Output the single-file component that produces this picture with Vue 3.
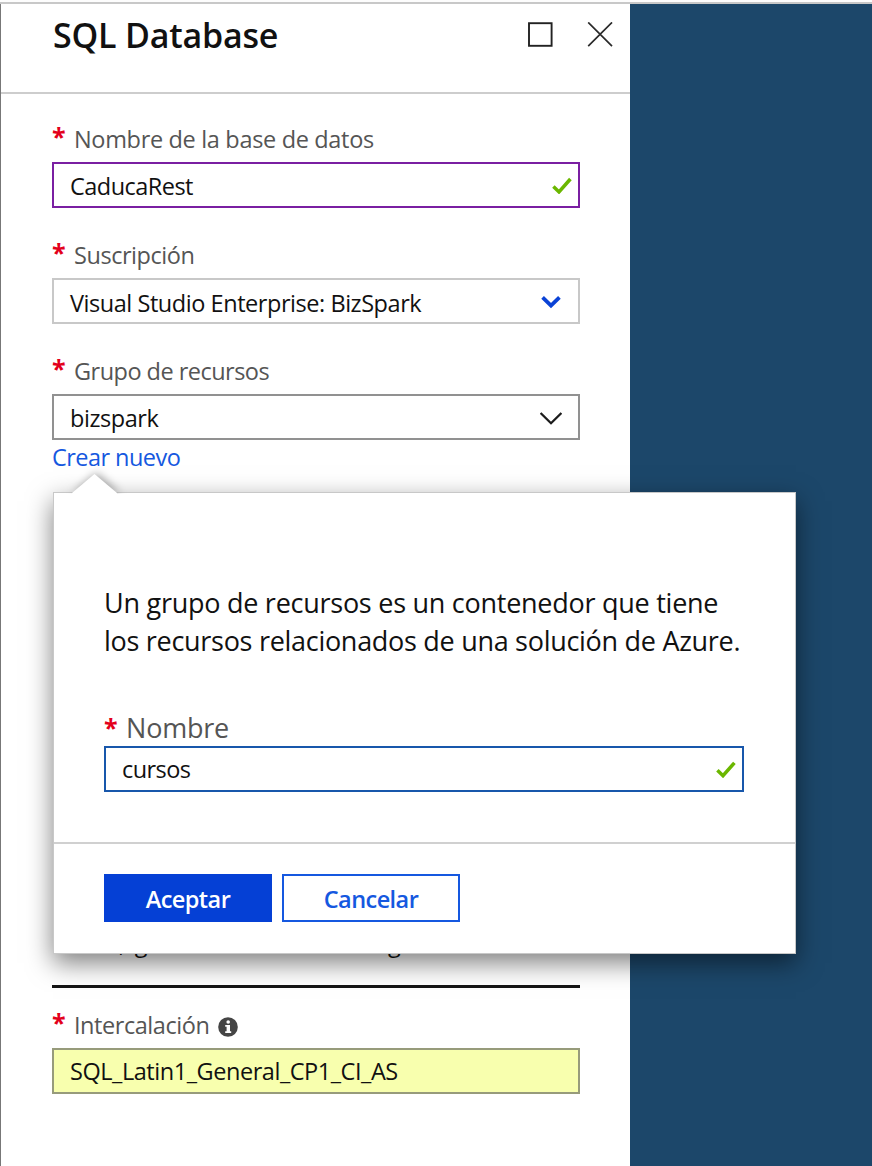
<script setup>
const fields = [
  { id: 'name', label: 'Nombre de la base de datos', value: 'CaducaRest', kind: 'valid' },
  { id: 'subscription', label: 'Suscripción', value: 'Visual Studio Enterprise: BizSpark', kind: 'select' },
  { id: 'group', label: 'Grupo de recursos', value: 'bizspark', kind: 'combo' },
]
</script>

<template>
  <div class="portal">
    <section class="blade">
      <header class="blade-header">
        <h1>SQL Database</h1>
        <div class="window-actions">
          <svg width="26" height="26" viewBox="0 0 26 26"><rect x="2" y="1.2" width="22.6" height="22.6" fill="none" stroke="#222" stroke-width="1.9" /></svg>
          <svg width="26" height="26" viewBox="0 0 26 26"><path d="M1.2 .4L25 24.2M25 .4L1.2 24.2" fill="none" stroke="#2a2a2a" stroke-width="1.7" /></svg>
        </div>
      </header>

      <div class="form">
        <div v-for="f in fields" :key="f.id" class="field">
          <div class="label"><b class="star">*</b><span :class="'l-' + f.id">{{ f.label }}</span></div>
          <div class="box" :class="f.kind">
            <span :class="'v-' + f.id">{{ f.value }}</span>
            <svg v-if="f.kind === 'valid'" width="20" height="18" viewBox="0 0 20 18"><path d="M1.4 10.4L7 15.9L18.4 3" fill="none" stroke="#6bb700" stroke-width="3.5" /></svg>
            <svg v-else-if="f.kind === 'select'" width="22" height="16" viewBox="0 0 22 16"><path d="M2.6 4.4L11 12.6L19.4 4.4" fill="none" stroke="#0a42d6" stroke-width="3.8" /></svg>
            <svg v-else width="22" height="16" viewBox="0 0 22 16"><path d="M.6 4L11 14.2L21.4 4" fill="none" stroke="#1c1c1c" stroke-width="2.3" /></svg>
          </div>
        </div>
        <a class="link">Crear nuevo</a>

        <div class="tier"><span>,</span><span>g</span><span>g</span></div>

        <div class="field last">
          <div class="label">
            <b class="star">*</b><span>Intercalación</span>
            <svg class="info" width="20" height="20" viewBox="0 0 20 20"><circle cx="10" cy="10" r="9.8" fill="#454545" /><circle cx="10.2" cy="5" r="1.8" fill="#fff" /><path d="M7.2 8H12V14.2H13.2V16H7.2V14.2H8.6V9.8H7.2Z" fill="#fff" /></svg>
          </div>
          <div class="box readonly"><span>SQL_Latin1_General_CP1_CI_AS</span></div>
        </div>
      </div>
    </section>

    <div class="popup">
      <svg class="arrow" width="46" height="21" viewBox="0 0 46 21"><path d="M0 21V20L22.5 1L45 20V21Z" fill="#fff" /></svg>
      <div class="popup-body">
        <p><span class="t-p1">Un grupo de recursos es un contenedor que tiene</span><br /><span class="t-p2">los recursos relacionados de una solución de Azure.</span></p>
        <div class="label"><b class="star">*</b><span>Nombre</span></div>
        <div class="box focus">
          <span class="v-new">cursos</span>
          <svg width="20" height="18" viewBox="0 0 20 18"><path d="M1.4 10.2L7 15.7L18.4 2.8" fill="none" stroke="#6bb700" stroke-width="3.5" /></svg>
        </div>
      </div>
      <footer>
        <button class="primary">Aceptar</button>
        <button>Cancelar</button>
      </footer>
    </div>
  </div>
</template>

<style>
body { margin: 0; overflow: hidden; }
</style>

<style scoped>
* { box-sizing: border-box; }
.portal {
  position: relative;
  width: 872px;
  height: 1166px;
  overflow: hidden;
  background: #1c476a;
  border-top: 2px solid #fdfdfd;
  font-family: "Open Sans", "Noto Sans", sans-serif;
  font-size: 23.5px;
  letter-spacing: -.45px;
  color: #111;
}
.portal::before { content: ""; display: block; height: 2px; background: #c8c8c8; }
span { white-space: pre; }
.blade { width: 630px; height: 1162px; background: #fff; border-left: 1px solid #777; }
.blade-header {
  height: 90px;
  display: flex;
  justify-content: space-between;
  border-bottom: 2px solid #cdcdcd;
  padding: 0 17px 0 52px;
}
h1 { margin: 7px 0 0; font-size: 34px; line-height: 49px; font-weight: 600; letter-spacing: -.2px; }
.window-actions { display: flex; gap: 34px; padding-top: 18px; }
.form { padding: 31px 50px 0 51px; }
.field { height: 116px; }
.label { display: flex; height: 37px; line-height: 29px; color: #555; }
.star { width: 22px; font-size: 25px; line-height: 23px; color: #e3001b; font-weight: 700; letter-spacing: 0; }
.box {
  display: flex;
  align-items: center;
  justify-content: space-between;
  height: 46px;
  border: 2px solid #c8c8c8;
  padding: 0 6px 0 16px;
  line-height: 42px;
}
.l-name { letter-spacing: -.33px; }
.l-group { letter-spacing: -.52px; }
.v-name { letter-spacing: -.53px; }
.v-new { letter-spacing: -.58px; }
.v-name, .v-group { padding-top: 1px; }
.v-subscription { padding-top: 3px; }
.valid { border-color: #7a1fa2; }
.select, .combo { padding-right: 16px; }
.combo { border-color: #919191; }
.focus { border-color: #1857ab; }
.readonly { border-color: #979b7b; background: #f8ffae; }
.link { display: block; margin-top: -34px; height: 36px; line-height: 36px; color: #1558e0; letter-spacing: -.55px; }
.tier {
  display: flex;
  align-items: flex-end;
  height: 553px;
  margin-top: -40px;
  border-bottom: 3px solid #151515;
  padding: 0 0 24px 67px;
  line-height: 36px;
}
.tier span:nth-child(2) { margin-left: 10px; }
.tier span:nth-child(3) { margin-left: 241px; }
.last { margin-top: 23px; }
.info { margin: 6px 0 0 9px; }
.popup {
  position: absolute;
  left: 53px;
  top: 490px;
  width: 743px;
  height: 462px;
  background: #fff;
  border: 1px solid #c8c8c8;
  box-shadow: 0 9px 24px rgba(0, 0, 0, .5);
}
.arrow { position: absolute; left: 18px; top: -20px; filter: drop-shadow(2px -1px 4px rgba(0, 0, 0, .35)); clip-path: inset(-12px -12px 0 -12px); }
.popup-body { height: 351px; padding: 91px 51px 0 50px; border-bottom: 2px solid #d0d0d0; }
.popup p { margin: 0 0 50px; font-size: 27px; line-height: 38px; }
.t-p1 { letter-spacing: -.26px; }
.t-p2 { letter-spacing: -.29px; }
.popup .label { height: 36px; font-size: 27px; line-height: 36px; letter-spacing: -.2px; }
.popup .label .star { line-height: 34px; }
.popup footer { display: flex; gap: 10px; padding: 30px 0 0 50px; }
button {
  width: 178px;
  height: 48px;
  border: 2px solid #1558e0;
  padding: 2px 0 0;
  background: #fff;
  color: #1558e0;
  font: 600 23.5px/42px "Open Sans", "Noto Sans", sans-serif;
  letter-spacing: -.55px;
}
.primary { width: 168px; border-color: #0540d5; background: #0540d5; color: #fff; }
</style>
